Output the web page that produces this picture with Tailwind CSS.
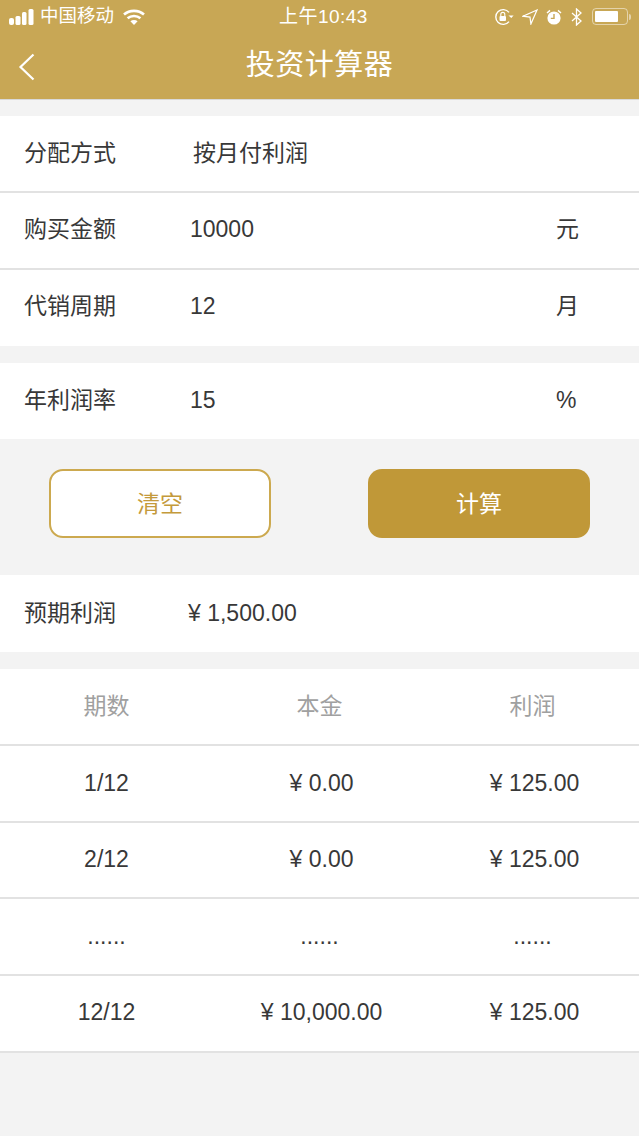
<!DOCTYPE html>
<html lang="zh-CN">
<head>
    <meta charset="UTF-8">
    <meta name="viewport" content="width=device-width, initial-scale=1.0">
    <title>投资计算器</title>
    <script src="https://cdn.jsdelivr.net/npm/@tailwindcss/browser@4"></script>
</head>
<body class="bg-[#f3f3f3] min-h-screen text-[#383838] font-['Liberation_Sans','Noto_Sans_CJK_SC',sans-serif]">
    <!-- Header -->
    <header class="bg-[#c8a755] h-[100px] border-b border-[#d9d9d9] text-white">
        <div class="h-[33px] flex items-center justify-between pl-[9px] pr-[8px] relative">
            <div class="flex items-center">
                <svg width="26" height="16" viewBox="0 0 26 16" fill="white">
                    <rect x="0" y="9" width="5" height="7" rx="2"/>
                    <rect x="6.5" y="7" width="5" height="9" rx="1.5"/>
                    <rect x="13" y="3" width="4.5" height="13" rx="1.5"/>
                    <rect x="19.5" y="0" width="5" height="16" rx="1.5"/>
                </svg>
                <span class="text-[18.5px] ml-[5px] leading-none">中国移动</span>
                <svg class="ml-[9px]" width="22" height="16" viewBox="0 0 22 16" fill="none" stroke="white" stroke-width="2.6">
                    <path d="M1 5.5C6.5 .6 15.5 .6 21 5.5"/>
                    <path d="M4.6 9.2C8 6.2 14 6.2 17.4 9.2"/>
                    <path d="M11 16l-3.6-3.8c2-1.6 5.2-1.6 7.2 0z" fill="white" stroke="none"/>
                </svg>
            </div>
            <span class="absolute left-[279px] top-[5px] text-[19px] leading-[24px] tracking-[0.45px]">上午10:43</span>
            <div class="flex items-center">
                <svg width="20" height="18" viewBox="0 0 20 18" fill="none" stroke="white" stroke-width="1.4">
                    <path d="M15 13.6A7.4 7.4 0 1 1 15 4.4"/>
                    <path d="M14.5 7.5l2.8 2.6 2.3-2.6z" fill="white" stroke="none"/>
                    <rect x="5.5" y="8" width="6.5" height="5" rx="1" fill="white" stroke="none"/>
                    <path d="M6.8 8V6.4a2 2 0 0 1 4 0V8" stroke-width="1.1"/>
                </svg>
                <svg class="ml-[8px]" width="16" height="16" viewBox="0 0 16 16" fill="none" stroke="white" stroke-width="1.2">
                    <path d="M15 1L1 7.2l7 .9 .9 6.9z"/>
                </svg>
                <svg class="ml-[8px]" width="16" height="16" viewBox="0 0 16 16" fill="white">
                    <circle cx="8" cy="9" r="6.6"/>
                    <path d="M1 4l3-2.6M15 4l-3-2.6" stroke="white" stroke-width="1.5"/>
                    <path d="M8 5v4.4H4.8" fill="none" stroke="#c8a755" stroke-width="1.4"/>
                </svg>
                <svg class="ml-[9px]" width="12" height="18" viewBox="0 0 12 18" fill="none" stroke="white" stroke-width="1.3">
                    <path d="M1 5l9 8-4.5 4V1L10 5l-9 8"/>
                </svg>
                <div class="ml-[9px] flex items-center">
                    <div class="w-[36px] h-[17px] rounded-[4px] border border-white/50 p-[2px]">
                        <div class="h-full w-[23px] bg-white rounded-[1px]"></div>
                    </div>
                    <div class="w-[2px] h-[6px] bg-white/50 rounded-r-sm ml-[1px]"></div>
                </div>
            </div>
        </div>
        <div class="h-[66px] relative flex items-center justify-center">
            <svg class="absolute left-[18px] top-[20px]" width="18" height="28" viewBox="0 0 18 28" fill="none" stroke="white" stroke-width="2.2">
                <path d="M15.5 1.5L2.5 14l13 12.5"/>
            </svg>
            <h1 class="text-[29px] leading-none tracking-[0.5px] -mt-[2px]">投资计算器</h1>
        </div>
    </header>

    <!-- Form -->
    <section class="mt-[16px] bg-white text-[23px]">
        <div class="h-[77px] flex items-center border-b-2 border-[#e2e2e2]">
            <span class="w-[193px] pl-[24px]">分配方式</span>
            <span>按月付利润</span>
        </div>
        <div class="h-[77px] flex items-center pb-[2px] border-b-2 border-[#e2e2e2]">
            <span class="w-[190px] pl-[24px]">购买金额</span>
            <span class="flex-1">10000</span>
            <span class="w-[83px]">元</span>
        </div>
        <div class="h-[76px] flex items-center pb-[3px]">
            <span class="w-[190px] pl-[24px]">代销周期</span>
            <span class="flex-1">12</span>
            <span class="w-[83px]">月</span>
        </div>
    </section>

    <section class="mt-[17px] bg-white text-[23px]">
        <div class="h-[76px] flex items-center pb-[2px]">
            <span class="w-[190px] pl-[24px]">年利润率</span>
            <span class="flex-1">15</span>
            <span class="w-[83px]">%</span>
        </div>
    </section>

    <!-- Buttons -->
    <div class="h-[136px] flex justify-between pl-[49px] pr-[49px] pt-[30px]">
        <button class="w-[222px] h-[69px] pt-[2px] rounded-[14px] border-2 border-[#cca94f] bg-white text-[#c49a3c] text-[23px]">清空</button>
        <button class="w-[222px] h-[69px] pt-[2px] rounded-[14px] bg-[#c09838] text-white text-[23px]">计算</button>
    </div>

    <!-- Result -->
    <section class="bg-white text-[23px]">
        <div class="h-[77px] flex items-center pb-[1px]">
            <span class="w-[188px] pl-[24px]">预期利润</span>
            <span>¥ 1,500.00</span>
        </div>
    </section>

    <!-- Table -->
    <section class="mt-[17px] bg-white text-[23px] border-b-2 border-[#e2e2e2]">
        <div class="grid grid-cols-3 h-[77px] items-center text-center text-[#a0a0a0] border-b-2 border-[#e2e2e2]">
            <span>期数</span><span>本金</span><span>利润</span>
        </div>
        <div class="grid grid-cols-3 h-[77px] items-center text-center border-b-2 border-[#e2e2e2]">
            <span>1/12</span><span class="pl-[4px]">¥ 0.00</span><span class="pl-[4px]">¥ 125.00</span>
        </div>
        <div class="grid grid-cols-3 h-[76px] items-center text-center pb-[1px] border-b-2 border-[#e2e2e2]">
            <span>2/12</span><span class="pl-[4px]">¥ 0.00</span><span class="pl-[4px]">¥ 125.00</span>
        </div>
        <div class="grid grid-cols-3 h-[77px] items-center text-center border-b-2 border-[#e2e2e2]">
            <span>......</span><span>......</span><span>......</span>
        </div>
        <div class="grid grid-cols-3 h-[75px] items-center text-center pb-[2px]">
            <span>12/12</span><span class="pl-[4px]">¥ 10,000.00</span><span class="pl-[4px]">¥ 125.00</span>
        </div>
    </section>
</body>
</html>
